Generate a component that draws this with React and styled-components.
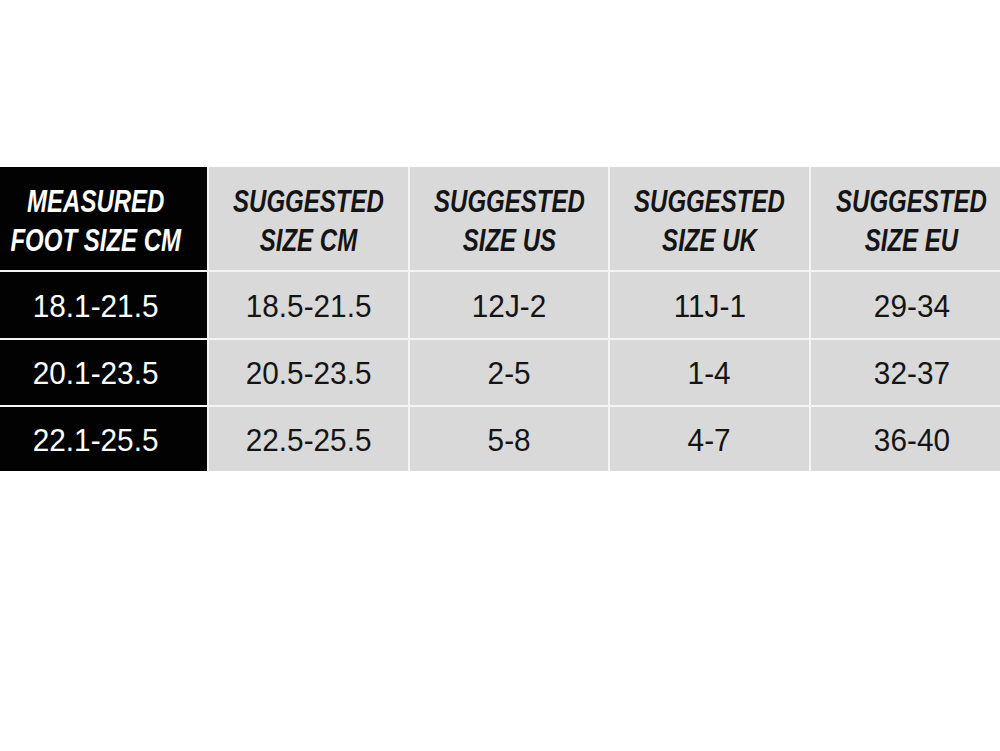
import React from "react";
import styled, { createGlobalStyle } from "styled-components";

const Global = createGlobalStyle`
  html, body { margin: 0; padding: 0; background: #ffffff; }
  body { font-family: "Liberation Sans", Arial, sans-serif; }
`;

const Page = styled.div`
  width: 1000px;
  height: 751px;
  background: #ffffff;
  padding-top: 167px;
  box-sizing: border-box;
`;

const Table = styled.div`
  display: grid;
  grid-template-columns: 207px 199px 198px 199px 1fr;
  grid-template-rows: 103px 66px 65px 64px;
  column-gap: 2px;
  row-gap: 2px;
  background: #f4f4f4;
  width: 1000px;
`;

const Cell = styled.div`
  display: flex;
  align-items: center;
  justify-content: center;
  text-align: center;
  background: ${(p) => (p.$dark ? "#020202" : "#d9d9d9")};
  color: ${(p) => (p.$dark ? "#ffffff" : "#141414")};
  box-sizing: border-box;
  padding-top: ${(p) => (p.$head ? "4px" : "1px")};
  padding-right: ${(p) => (p.$dark ? "16px" : "0")};
`;

const HeadText = styled.span`
  display: inline-block;
  white-space: nowrap;
  font-family: "Liberation Sans", Arial, sans-serif;
  font-size: 32px;
  font-weight: 700;
  font-style: italic;
  line-height: 39px;
  transform: scaleX(0.75);
`;

const ValueText = styled.span`
  display: inline-block;
  white-space: nowrap;
  font-family: "Liberation Sans", Arial, sans-serif;
  font-size: 32px;
  font-weight: 400;
  line-height: 1;
  transform: scaleX(0.93);
`;

const headers = [
  ["MEASURED", "FOOT SIZE CM"],
  ["SUGGESTED", "SIZE CM"],
  ["SUGGESTED", "SIZE US"],
  ["SUGGESTED", "SIZE UK"],
  ["SUGGESTED", "SIZE EU"],
];

const rows = [
  ["18.1-21.5", "18.5-21.5", "12J-2", "11J-1", "29-34"],
  ["20.1-23.5", "20.5-23.5", "2-5", "1-4", "32-37"],
  ["22.1-25.5", "22.5-25.5", "5-8", "4-7", "36-40"],
];

export default function App() {
  return (
    <Page>
      <Global />
      <Table>
        {headers.map((h, i) => (
          <Cell key={"h" + i} $head $dark={i === 0}>
            <HeadText>
              {h[0]}
              <br />
              {h[1]}
            </HeadText>
          </Cell>
        ))}
        {rows.map((r, ri) =>
          r.map((v, ci) => (
            <Cell key={ri + "-" + ci} $dark={ci === 0}>
              <ValueText>{v}</ValueText>
            </Cell>
          ))
        )}
      </Table>
    </Page>
  );
}
